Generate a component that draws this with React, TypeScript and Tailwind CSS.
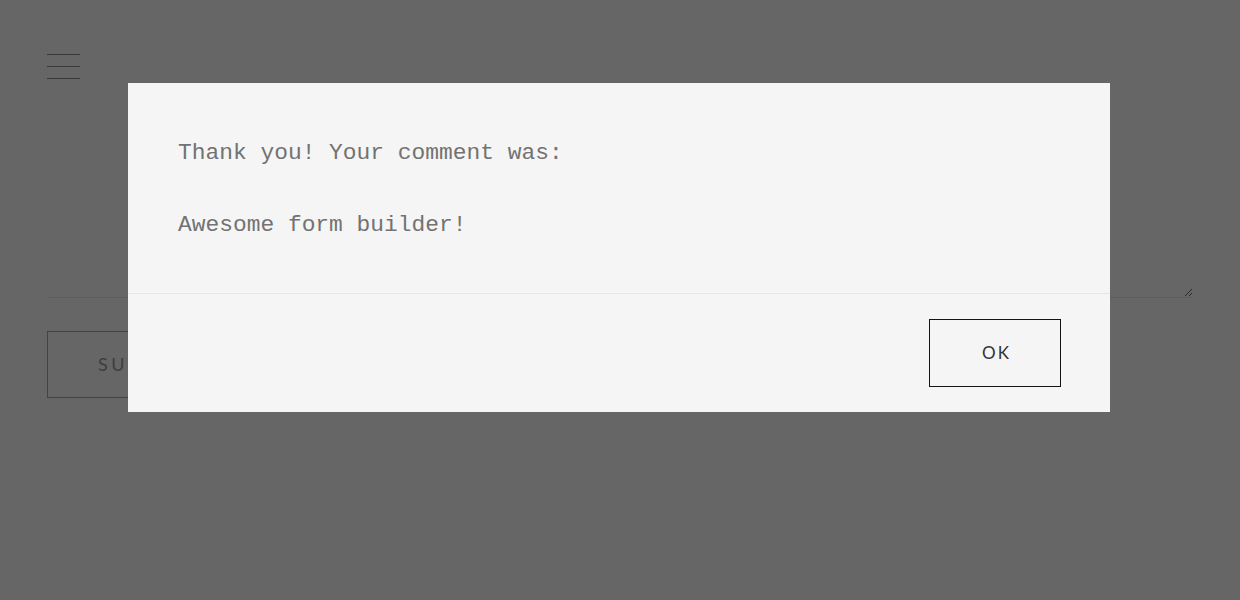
export default function App() {
  return (
    <div className="relative w-full h-[600px] overflow-hidden bg-white">
      {/* page underneath */}
      <div className="flex flex-col px-[47px] pt-[54px]">
        <button className="flex flex-col gap-[11px] w-[33px]">
          <span className="block h-px w-full bg-[#8f8f8f]" />
          <span className="block h-px w-full bg-[#8f8f8f]" />
          <span className="block h-px w-full bg-[#8f8f8f]" />
        </button>
        <textarea
          className="mt-[39px] h-[180px] w-full border-b border-[#e8e8e8] bg-transparent outline-none"
          defaultValue=""
        />
        <button className="mt-[33px] h-[67px] w-[220px] border border-[#a8a8a8] text-left pl-[50px] text-[18px] tracking-[0.2em] text-[#9a9a9a] font-['Lato',sans-serif]">
          SUBMIT
        </button>
      </div>

      {/* overlay */}
      <div className="absolute inset-0 bg-[rgba(0,0,0,0.6)] flex pl-[128px] pt-[83px]">
        <div className="w-[982px] h-[329px] bg-[#f5f5f5] flex flex-col">
          <div className="px-[50px] pt-[53px] pb-[51px] border-b border-[#e6e6e6] font-['Liberation_Mono',monospace] text-[22.9px] leading-[34px] text-[#727272]">
            <p>Thank you! Your comment was:</p>
            <p className="mt-[38px]">Awesome form builder!</p>
          </div>
          <div className="flex flex-1 items-center justify-end px-[49px]">
            <button className="h-[68px] w-[132px] border-[1.5px] border-[#141414] text-[17px] tracking-[0.12em] pl-[3px] text-[#333] font-['Lato',sans-serif]">
              OK
            </button>
          </div>
        </div>
      </div>
    </div>
  );
}
